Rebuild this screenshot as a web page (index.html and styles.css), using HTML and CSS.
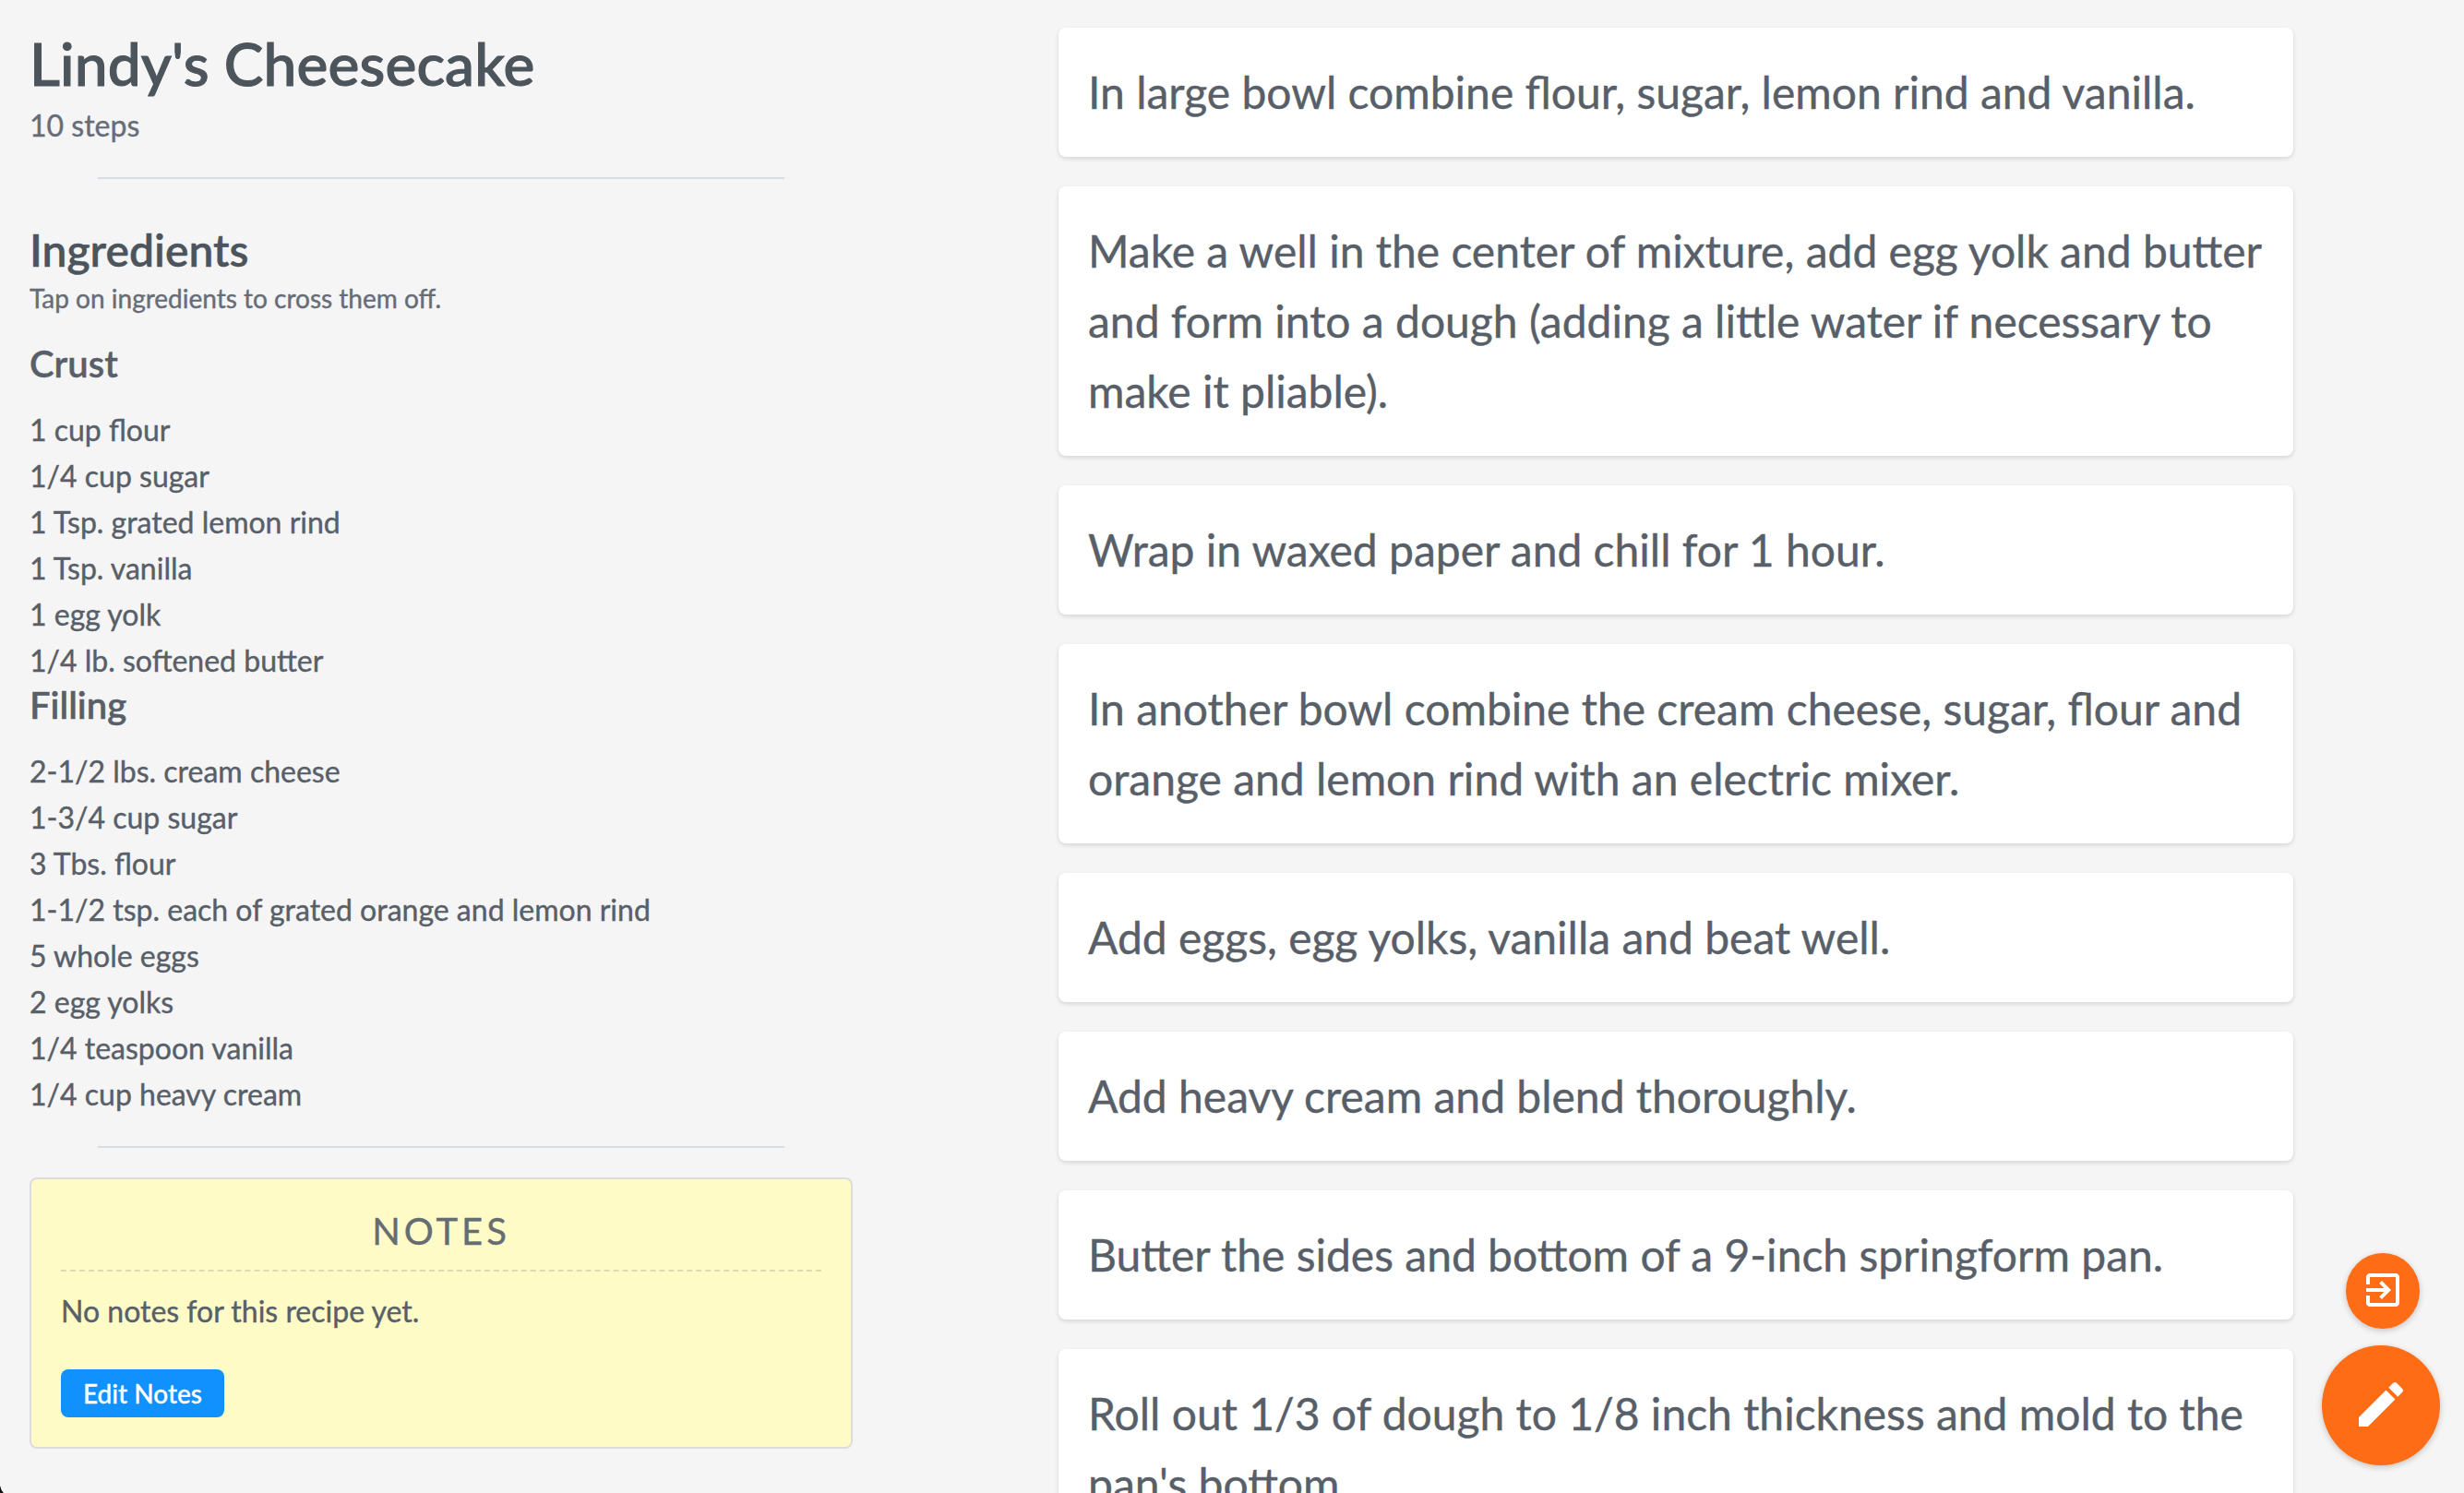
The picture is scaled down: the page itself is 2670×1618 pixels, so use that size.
FILE: index.html
```html
<!DOCTYPE html>
<html lang="en">
<head>
<meta charset="utf-8">
<title>Lindy's Cheesecake</title>
<link rel="stylesheet" href="styles.css">
</head>
<body>
<div class="page">
  <aside class="overview">
    <h1 class="title">Lindy's Cheesecake</h1>
    <p class="step-count">10 steps</p>
    <hr class="divider">
    <section class="ingredients">
      <h2 class="section-title">Ingredients</h2>
      <p class="hint">Tap on ingredients to cross them off.</p>
      <h3 class="group-title">Crust</h3>
      <ul class="items">
        <li>1 cup flour</li>
        <li>1/4 cup sugar</li>
        <li>1 Tsp. grated lemon rind</li>
        <li>1 Tsp. vanilla</li>
        <li>1 egg yolk</li>
        <li>1/4 lb. softened butter</li>
      </ul>
      <h3 class="group-title">Filling</h3>
      <ul class="items">
        <li>2-1/2 lbs. cream cheese</li>
        <li>1-3/4 cup sugar</li>
        <li>3 Tbs. flour</li>
        <li>1-1/2 tsp. each of grated orange and lemon rind</li>
        <li>5 whole eggs</li>
        <li>2 egg yolks</li>
        <li>1/4 teaspoon vanilla</li>
        <li>1/4 cup heavy cream</li>
      </ul>
    </section>
    <hr class="divider">
    <section class="notes">
      <h2 class="notes-title">NOTES</h2>
      <p class="notes-text">No notes for this recipe yet.</p>
      <button class="notes-button" type="button">Edit Notes</button>
    </section>
  </aside>
  <main class="steps">
    <p class="step">In large bowl combine flour, sugar, lemon rind and vanilla.</p>
    <p class="step">Make a well in the center of mixture, add egg yolk and butter and form into a dough (adding a little water if necessary to make it pliable).</p>
    <p class="step">Wrap in waxed paper and chill for 1 hour.</p>
    <p class="step">In another bowl combine the cream cheese, sugar, flour and orange and lemon rind with an electric mixer.</p>
    <p class="step">Add eggs, egg yolks, vanilla and beat well.</p>
    <p class="step">Add heavy cream and blend thoroughly.</p>
    <p class="step">Butter the sides and bottom of a 9-inch springform pan.</p>
    <p class="step">Roll out 1/3 of dough to 1/8 inch thickness and mold to the pan's bottom.</p>
  </main>
</div>
<nav class="actions">
  <button class="fab fab-small" type="button" aria-label="Exit">
    <svg viewBox="0 0 512 512"><path d="M215.469 332.802l29.863 29.864L352 256 245.332 149.334l-29.863 29.865 55.469 55.469H64v42.666h205.864l-54.395 55.468zM405.334 64H106.666C83.198 64 64 83.198 64 106.666V192h42.666v-85.334h298.668v298.668H106.666V320H64v85.334C64 428.802 83.198 448 106.666 448h298.668C428.802 448 448 428.802 448 405.334V106.666C448 83.198 428.802 64 405.334 64z"/></svg>
  </button>
  <button class="fab fab-large" type="button" aria-label="Edit">
    <svg viewBox="0 0 512 512"><path d="M64 368v80h80l235.727-235.729-79.999-79.998L64 368zm377.602-217.602c8.531-8.531 8.531-21.334 0-29.865l-50.135-50.135c-8.531-8.531-21.334-8.531-29.865 0l-39.468 39.469 79.999 79.998 39.469-39.467z"/></svg>
  </button>
</nav>
<svg class="corner" viewBox="0 0 8 8"><path d="M0 0Q1 5 4 8H0z"/></svg>
</body>
</html>
```
FILE: styles.css
```css
* { box-sizing: border-box; margin: 0; padding: 0; }

body {
  height: 1618px;
  overflow: hidden;
  background: #f5f5f5;
  color: #585f69;
  font-family: Lato, sans-serif;
  font-size: 32px;
  -webkit-text-stroke: 0.4px currentColor;
}

.page {
  display: grid;
  grid-template-columns: 892px 1338px;
  column-gap: 223px;
  align-items: start;
  padding: 30px 32px 0;
}

.title {
  padding-top: 1px;
  color: #4c545c;
  font-size: 64px;
  font-weight: 500;
  letter-spacing: 0.1px;
  line-height: 76px;
  -webkit-text-stroke-width: 1.1px;
}

.step-count {
  padding-top: 5px;
  color: #666d78;
  line-height: 48px;
}

.divider {
  width: 744px;
  height: 2px;
  margin: 32px auto 48px;
  border: 0;
  background: #dadce4;
}

.section-title {
  color: #4c545c;
  font-size: 48px;
  font-weight: 600;
  line-height: 58px;
}

.hint {
  margin: 6px 0 30px;
  color: #666d78;
  font-size: 28px;
  line-height: 34px;
}

.group-title {
  margin-bottom: 22px;
  font-size: 40px;
  font-weight: 600;
  line-height: 48px;
}

.items {
  margin-bottom: -1px;
  padding-top: 1px;
  line-height: 50px;
  list-style: none;
}

.ingredients + .divider { margin: 32px auto; }

.notes {
  height: 294px;
  padding: 32px;
  border: 2px solid #dcdcdc;
  border-radius: 8px;
  background: #fefbc7;
}

.notes-title {
  height: 68px;
  margin-bottom: 18px;
  border-bottom: 2px dashed #dedbae;
  color: #666d72;
  font-size: 40px;
  font-weight: 400;
  letter-spacing: 4px;
  line-height: 48px;
  text-align: center;
}

.notes-text { line-height: 50px; }

.notes-button {
  display: block;
  width: 177px;
  height: 52px;
  margin-top: 38px;
  border: 0;
  border-radius: 8px;
  background: #1191fd;
  color: #fff;
  font: 500 28px/52px Lato, sans-serif;
  -webkit-text-stroke: 0.3px #fff;
}

.steps { display: flex; flex-direction: column; gap: 32px; }

.step {
  padding: 32px;
  border-radius: 8px;
  background: #fff;
  box-shadow: 0 2px 4px rgba(40, 45, 60, 0.16);
  font-size: 48px;
  line-height: 76px;
}

.actions {
  position: fixed;
  right: 26px;
  bottom: 30px;
  display: flex;
  flex-direction: column;
  align-items: center;
  gap: 18px;
}

.fab {
  display: flex;
  align-items: center;
  justify-content: center;
  border: 0;
  border-radius: 50%;
  background: #fe6c16;
  box-shadow: 0 2px 6px rgba(60, 40, 30, 0.25);
}

.fab svg { fill: #fff; }
.fab-small { width: 80px; height: 82px; margin-left: 4px; }
.fab-small svg { width: 48px; height: 48px; margin-bottom: 2px; }
.fab-large { width: 128px; height: 130px; }
.fab-large svg { width: 64px; height: 64px; margin-bottom: 2px; }

.corner { position: fixed; left: 0; bottom: 0; width: 8px; height: 8px; fill: #111; }
```
